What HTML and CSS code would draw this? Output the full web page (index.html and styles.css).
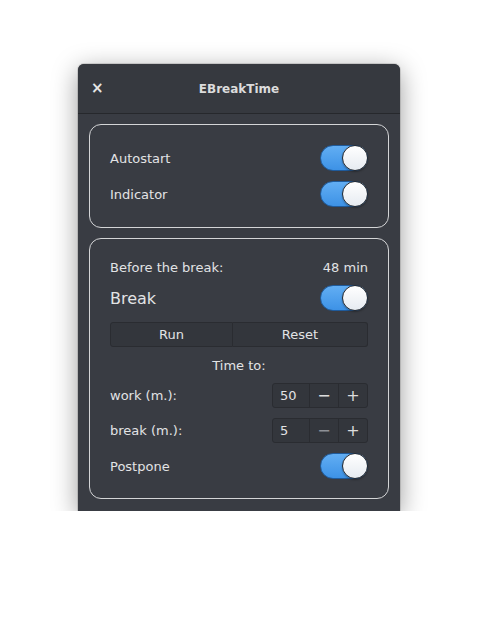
FILE: index.html
```html
<!DOCTYPE html>
<html lang="en">
<head>
  <meta charset="UTF-8">
  <meta name="viewport" content="width=device-width, initial-scale=1.0">
  <title>EBreakTime</title>
  <link rel="stylesheet" href="styles.css">
</head>
<body>
  <div class="window">
    <div class="headerbar">
      <span class="close">×</span>
      <span class="title">EBreakTime</span>
    </div>

    <div class="content">
      <div class="frame">
        <div class="row">
          <span>Autostart</span>
          <span class="switch"><span class="knob"></span></span>
        </div>
        <div class="row">
          <span>Indicator</span>
          <span class="switch"><span class="knob"></span></span>
        </div>
      </div>

      <div class="frame">
        <div class="row small">
          <span>Before the break:</span>
          <span>48 min</span>
        </div>
        <div class="row">
          <span class="big">Break</span>
          <span class="switch"><span class="knob"></span></span>
        </div>
        <div class="linked">
          <button class="btn run">Run</button>
          <button class="btn reset">Reset</button>
        </div>
        <div class="row small centered">Time to:</div>
        <div class="row spin-row">
          <span>work (m.):</span>
          <span class="spin">
            <span class="spin-value">50</span>
            <span class="spin-btn">−</span>
            <span class="spin-btn">+</span>
          </span>
        </div>
        <div class="row spin-row">
          <span>break (m.):</span>
          <span class="spin">
            <span class="spin-value">5</span>
            <span class="spin-btn dim">−</span>
            <span class="spin-btn">+</span>
          </span>
        </div>
        <div class="row">
          <span>Postpone</span>
          <span class="switch"><span class="knob"></span></span>
        </div>
      </div>
    </div>
  </div>
</body>
</html>
```

FILE: styles.css
```css
body {
  margin: 0;
  background-color: #ffffff;
  font-family: "DejaVu Sans", sans-serif;
  font-size: 13px;
  color: #e2e3e5;
}

.window {
  width: 322px;
  height: 447px;
  margin: 64px 0 0 78px;
  background-color: #393c43;
  border-radius: 6px 6px 0 0;
  box-shadow: 0 6px 26px rgba(0, 0, 0, 0.4), 0 0 0 1px rgba(0, 0, 0, 0.12);
  display: flex;
  flex-direction: column;
}

.headerbar {
  height: 49px;
  flex-shrink: 0;
  background-color: #36393f;
  border-bottom: 1px solid #26282c;
  border-radius: 6px 6px 0 0;
  display: flex;
  align-items: center;
  justify-content: center;
  position: relative;
}

.close {
  position: absolute;
  left: 13px;
  top: 15px;
  font-size: 15px;
  font-weight: bold;
  color: #e6e6e6;
}

.title {
  font-weight: bold;
  font-size: 12px;
  color: #dcdcdc;
}

.content {
  padding: 10px 11px;
  display: flex;
  flex-direction: column;
  gap: 10px;
}

.frame {
  border: 1px solid #d4d5d7;
  border-radius: 12px;
  padding: 20px 20px 19px 20px;
  display: flex;
  flex-direction: column;
  gap: 10px;
}

.frame:first-child {
  padding-bottom: 20px;
}

.row {
  height: 26px;
  display: flex;
  align-items: center;
  justify-content: space-between;
}

.row.small {
  height: 16px;
}

.row.spin-row {
  height: 25px;
}

.row.centered {
  justify-content: center;
}

.big {
  font-size: 16px;
}

/* switch */
.switch {
  width: 48px;
  height: 26px;
  box-sizing: border-box;
  border-radius: 13px;
  background: linear-gradient(#62aef3, #3d92e6);
  border: 1px solid #1f5b9c;
  position: relative;
}

.knob {
  position: absolute;
  right: -1px;
  top: -1px;
  width: 26px;
  height: 26px;
  box-sizing: border-box;
  border-radius: 50%;
  background: linear-gradient(#ffffff, #e6ebf1);
  border: 1px solid #25282d;
  box-shadow: 0 1px 2px rgba(0, 0, 0, 0.3);
}

/* linked buttons */
.linked {
  display: flex;
  height: 25px;
  margin-top: 1px;
}

.btn {
  height: 25px;
  padding: 0;
  font-family: "DejaVu Sans", sans-serif;
  font-size: 13px;
  color: #e2e3e5;
  background-color: #33363c;
  border: 1px solid #2a2c31;
  box-sizing: border-box;
}

.run {
  width: 123px;
  border-radius: 3px 0 0 3px;
}

.reset {
  width: 135px;
  border-left: none;
  border-radius: 0 3px 3px 0;
}

/* spin buttons */
.spin {
  display: flex;
  width: 96px;
  height: 25px;
  box-sizing: border-box;
  background-color: #33363c;
  border: 1px solid #2a2c31;
  border-radius: 3px;
}

.spin-value {
  width: 37px;
  padding-left: 7px;
  box-sizing: border-box;
  display: flex;
  align-items: center;
  border-right: 1px solid #2a2c31;
}

.spin-btn {
  flex: 1;
  display: flex;
  align-items: center;
  justify-content: center;
  font-size: 16px;
  color: #dcdcdc;
}

.spin-btn + .spin-btn {
  border-left: 1px solid #2a2c31;
}

.spin-btn.dim {
  color: #8d9096;
}
```
